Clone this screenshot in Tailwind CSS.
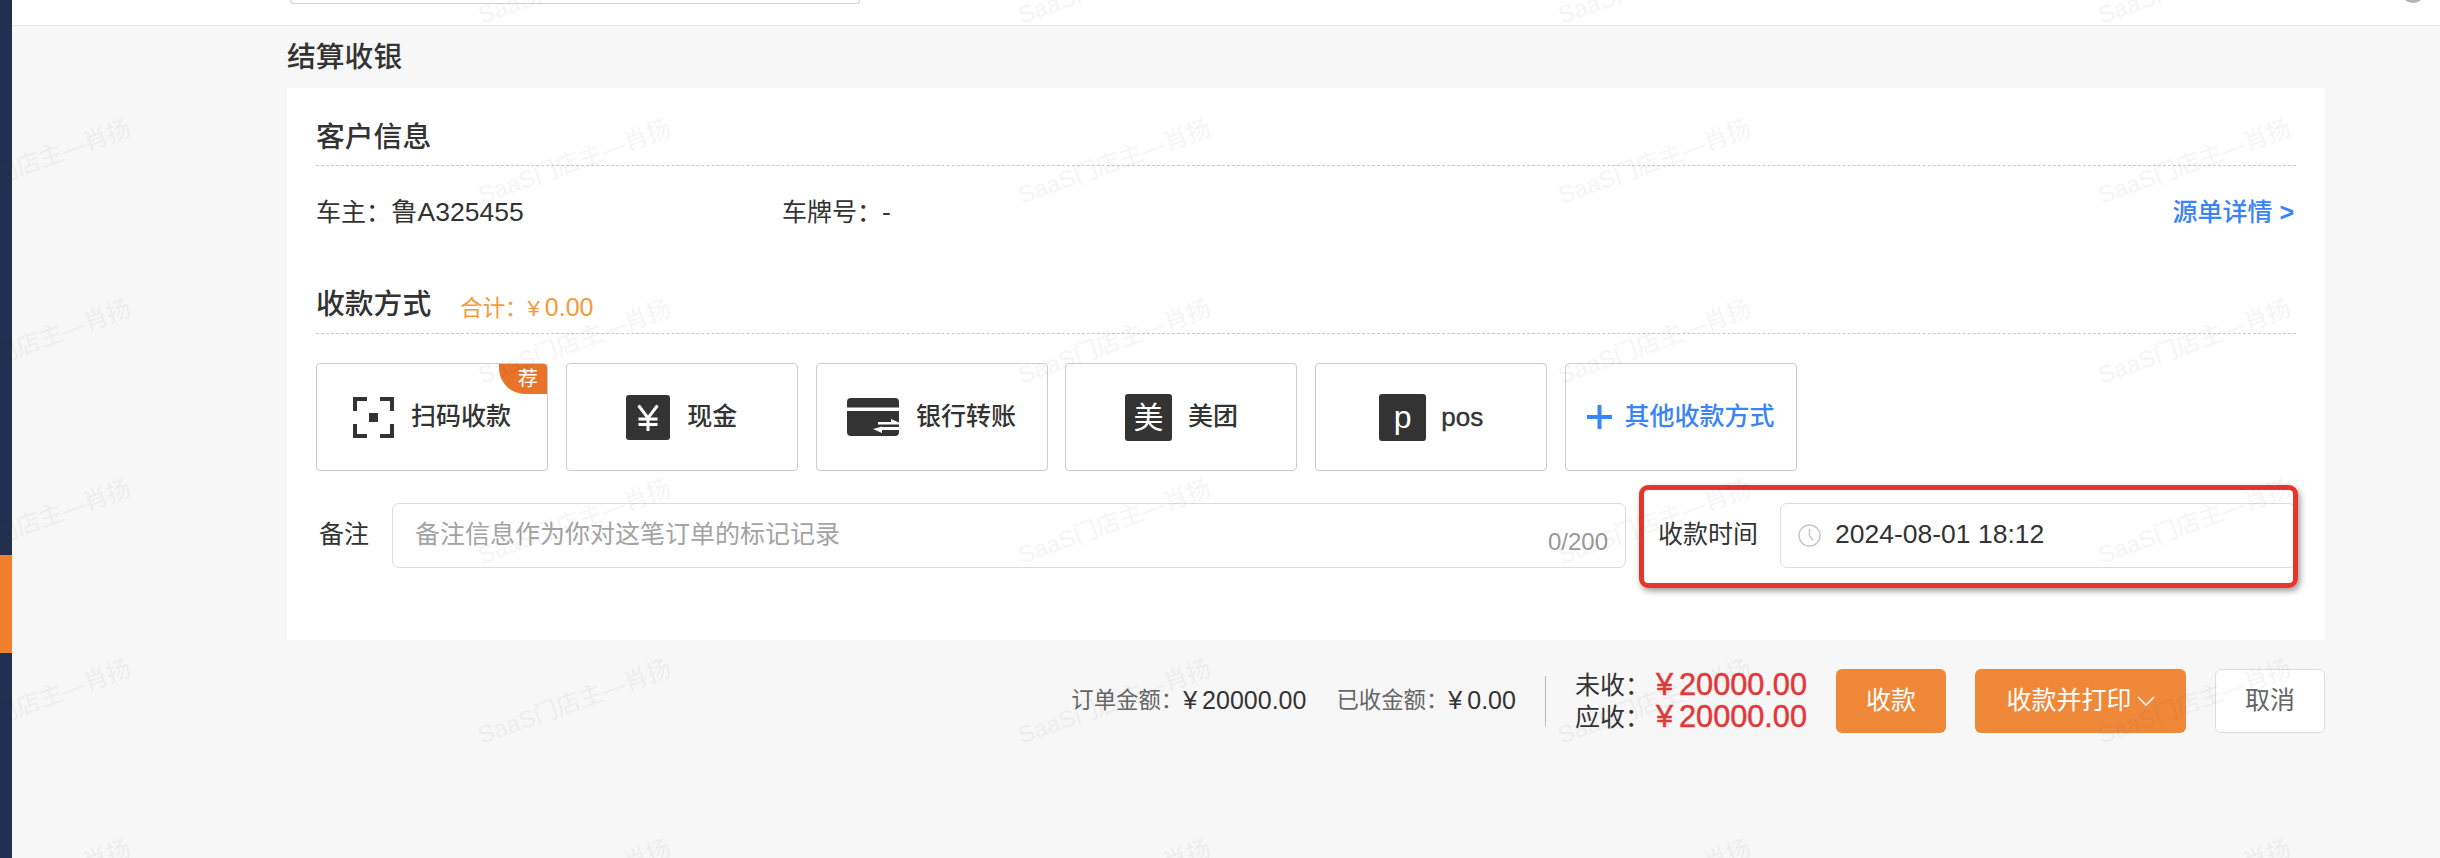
<!DOCTYPE html>
<html lang="zh-CN">
<head>
    <meta charset="UTF-8">
    <script src="https://cdn.jsdelivr.net/npm/@tailwindcss/browser@4"></script>
    <title>结算收银</title>
</head>
<body class="[font-family:'Liberation_Sans','Noto_Sans_CJK_SC',sans-serif] text-[25px] text-[#333] bg-[#f7f7f7]">
<div class="relative flex h-[858px] w-[2440px] overflow-hidden">
    <!-- Sidebar -->
    <aside class="w-3 shrink-0 bg-[#232f4f] pt-[555px]">
        <div class="h-[98px] bg-[#f07f2e]"></div>
    </aside>

    <main class="flex-1">
        <!-- Top bar, scrolled nearly out of view -->
        <header class="flex h-[26px] justify-between overflow-hidden border-b border-[#e6e6e6] bg-white pl-[278px] pr-[14px]">
            <div class="h-[4px] w-[570px] rounded-b-[4px] border border-t-0 border-[#d0d0d0]"></div>
            <div class="-mt-[23px] size-[26px] rounded-full bg-[#b5b5b5]"></div>
        </header>

        <div class="pl-[275px] pr-[115px]">
            <h1 class="mt-[11px] mb-[11px] h-[40px] text-[28.8px] leading-[40px] font-medium">结算收银</h1>

            <section class="bg-white px-[29px] pb-[72px]">
                <h2 class="flex h-[78px] items-center border-b border-dashed border-[#c8c8c8] pt-[23px] text-[28.8px] font-medium">客户信息</h2>

                <div class="flex h-[94px] items-center">
                    <div class="w-[466px]">车主：<span class="text-[26.5px]">鲁A325455</span></div>
                    <div class="flex-1">车牌号：<span class="text-[26.5px]">-</span></div>
                    <a class="pr-[2px] font-medium text-[#3a84f6]">源单详情 <b>&gt;</b></a>
                </div>

                <div class="flex h-[74px] items-center gap-[29px] border-b border-dashed border-[#c8c8c8] pt-[17px]">
                    <h2 class="text-[28.8px] font-medium">收款方式</h2>
                    <span class="pt-[5px] text-[22.4px] text-[#f59a3a]">合计：<span class="mr-[5px]">¥</span><span class="text-[25px]">0.00</span></span>
                </div>

                <!-- Payment methods -->
                <div class="mt-[29px] flex gap-[17.8px] font-medium">
                    <button class="relative flex h-[108px] w-[232px] items-center justify-center gap-[17px] overflow-hidden rounded-[4px] border border-[#ccc]">
                        <svg width="41" height="41" viewBox="0 0 41 41" fill="#333">
                            <path d="M0 0h14v4H4v10H0zM27 0h14v14h-4V4H27zM0 27h4v10h10v4H0zM37 27h4v14H27v-4h10z"/>
                            <rect x="16" y="16" width="9" height="9"/>
                        </svg>
                        <span>扫码收款</span>
                        <span class="absolute top-0 right-0 flex h-[30px] w-[48px] items-center justify-end rounded-bl-[26px] bg-[#e9732b] pr-[9px] text-[20px] font-normal text-white">荐</span>
                    </button>
                    <button class="flex h-[108px] w-[232px] items-center justify-center gap-[17px] rounded-[4px] border border-[#ccc]">
                        <svg width="44" height="45" viewBox="0 0 44 45">
                            <rect width="44" height="45" rx="3" fill="#333"/>
                            <path d="M12.500 10.500l9.500 12.500 9.500-12.500M22 23v13M12.500 24h19M12.500 29.500h19" fill="none" stroke="#fff" stroke-width="3"/>
                        </svg>
                        <span>现金</span>
                    </button>
                    <button class="flex h-[108px] w-[232px] items-center justify-center gap-[17px] rounded-[4px] border border-[#ccc]">
                        <svg width="52" height="38" viewBox="0 0 52 38">
                            <rect width="52" height="38" rx="4" fill="#333"/>
                            <rect y="9.500" width="52" height="3.500" fill="#fff"/>
                            <path d="M31 24h13v-3l8 3.500v2H31zM52 29H35v-.500l-9 2.500 9 4v-3h17z" fill="#fff"/>
                        </svg>
                        <span>银行转账</span>
                    </button>
                    <button class="flex h-[108px] w-[232px] items-center justify-center gap-[16px] rounded-[4px] border border-[#ccc]">
                        <span class="flex size-[47px] items-center justify-center rounded-[3px] bg-[#333] text-[30px] font-normal text-white">美</span>
                        <span>美团</span>
                    </button>
                    <button class="flex h-[108px] w-[232px] items-center justify-center gap-[15px] rounded-[4px] border border-[#ccc]">
                        <span class="flex size-[47px] items-center justify-center rounded-[3px] bg-[#333] text-[32px] font-normal text-white">p</span>
                        <span class="text-[26px] [-webkit-text-stroke:0.4px_#333]">pos</span>
                    </button>
                    <button class="flex h-[108px] w-[232px] items-center justify-center gap-[12px] rounded-[4px] border border-[#ccc] text-[#3a84f6]">
                        <svg width="25" height="24" viewBox="0 0 25 24"><path d="M12.500 0v24M0 12h25" stroke="#3a84f6" stroke-width="4"/></svg>
                        <span>其他收款方式</span>
                    </button>
                </div>

                <!-- Remark and payment time -->
                <div class="mt-[32px] flex h-[65px]">
                    <div class="flex w-[76px] items-center pl-[3px] pb-[1px]">备注</div>
                    <div class="relative flex w-[1234px] items-center rounded-[7px] border border-[#ddd] pb-[2px] pl-[22px] text-[#a3a3a3]">
                        备注信息作为你对这笔订单的标记记录
                        <span class="absolute right-[17px] bottom-[7px] text-[24px] text-[#999]">0/200</span>
                    </div>
                    <div class="relative flex flex-1 items-center pl-[32px]">
                        <span class="w-[122px] pb-[1px]">收款时间</span>
                        <div class="flex h-full flex-1 items-center gap-[14px] rounded-[7px] border border-[#ddd] pl-[17px]">
                            <svg width="23" height="23" viewBox="0 0 23 23" fill="none" stroke="#c9c9c9" stroke-width="1.500">
                                <circle cx="11.500" cy="11.500" r="10.500"/>
                                <path d="M11.500 5v7l4 4.500"/>
                            </svg>
                            <span class="pb-[2px] text-[26.500px]">2024-08-01 18:12</span>
                        </div>
                        <!-- Red annotation frame -->
                        <div class="absolute -top-[18px] -right-[2px] -bottom-[20px] left-[13px] rounded-[9px] border-[5px] border-[#e8352a] shadow-[2px_3px_6px_rgba(0,0,0,0.4)]"></div>
                    </div>
                </div>
            </section>

            <!-- Totals and actions -->
            <footer class="mt-[29px] flex items-center justify-end">
                <div class="text-[22.4px] text-[#666]">订单金额：</div>
                <div class="text-[25px] text-[#333]"><span class="mr-[5px]">¥</span>20000.00</div>
                <div class="ml-[30px] text-[22.4px] text-[#666]">已收金额：</div>
                <div class="text-[25px] text-[#333]"><span class="mr-[5px]">¥</span>0.00</div>
                <div class="mx-[29px] h-[50px] w-px bg-[#bbb]"></div>
                <div class="leading-[32px]">
                    <div class="flex items-center"><span class="w-[81px]">未收：</span><span class="text-[30.700px] text-[#e0393a] [-webkit-text-stroke:0.5px_#e0393a]"><span class="mr-[6px]">¥</span>20000.00</span></div>
                    <div class="flex items-center"><span class="w-[81px]">应收：</span><span class="text-[30.700px] text-[#e0393a] [-webkit-text-stroke:0.5px_#e0393a]"><span class="mr-[6px]">¥</span>20000.00</span></div>
                </div>
                <button class="ml-[29px] h-[64px] w-[110px] rounded-[6px] bg-[#f0883a] text-white">收款</button>
                <button class="ml-[29px] flex h-[64px] w-[211px] items-center justify-center gap-[5px] rounded-[6px] bg-[#f0883a] text-white">
                    收款并打印
                    <svg width="18" height="10" viewBox="0 0 18 10" fill="none" stroke="#fff" stroke-width="1.500"><path d="M1 1l8 8 8-8"/></svg>
                </button>
                <button class="ml-[29px] h-[64px] w-[110px] rounded-[6px] border border-[#dcdce6] bg-white text-[#666]">取消</button>
            </footer>
        </div>
    </main>

    <!-- Watermark tiled across the whole page -->
    <svg class="pointer-events-none absolute inset-0" width="2440" height="858">
        <defs>
            <pattern id="wm" width="540" height="180" patternUnits="userSpaceOnUse" patternTransform="translate(462 104)">
                <text x="20" y="100" transform="rotate(-20 20 100)" font-size="24" fill="#000" fill-opacity="0.04">SaaS门店主—肖扬</text>
            </pattern>
        </defs>
        <rect width="2440" height="858" fill="url(#wm)"/>
    </svg>
</div>
</body>
</html>
